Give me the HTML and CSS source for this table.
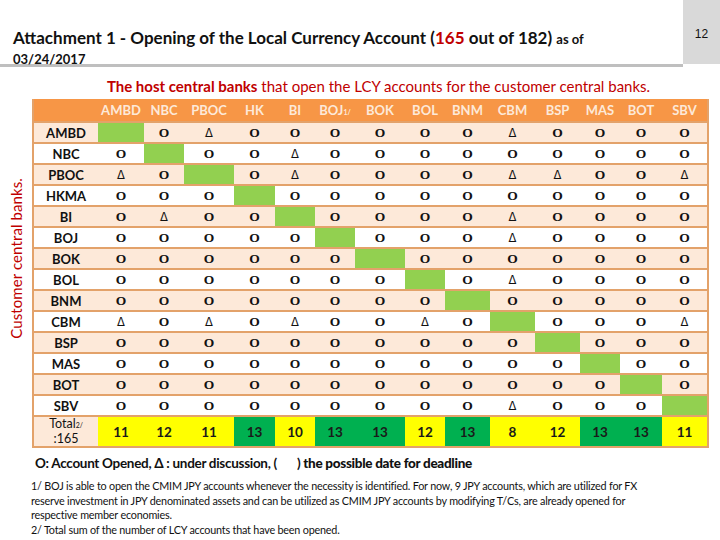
FILE: index.html
```html
<!DOCTYPE html>
<html>
<head>
<meta charset="utf-8">
<link rel="stylesheet" href="styles.css">
</head>
<body>
<div class="slide">
  <header class="top">
    <div class="title">
      <div class="title-line">Attachment 1 - Opening of the Local Currency Account (<span class="red">165</span> out of 182) <span class="small">as of</span></div>
      <div class="date">03/24/2017</div>
    </div>
    <div class="pagenum">12</div>
  </header>
  <div class="rule"></div>
  <p class="subtitle"><b>The host central banks</b> that open the LCY accounts for the customer central banks.</p>
  <div class="main">
    <div class="side"><span class="side-text">Customer central banks.</span></div>
    <table class="grid">
      <colgroup>
        <col class="w65"><col class="w46"><col class="w40"><col class="w50"><col class="w41"><col class="w40"><col class="w40"><col class="w50"><col class="w40"><col class="w45"><col class="w45"><col class="w45"><col class="w40"><col class="w42"><col class="w46">
      </colgroup>
      <thead>
        <tr><th></th><th>AMBD</th><th>NBC</th><th>PBOC</th><th>HK</th><th>BI</th><th>BOJ<sub>1/</sub></th><th>BOK</th><th>BOL</th><th>BNM</th><th>CBM</th><th>BSP</th><th>MAS</th><th>BOT</th><th>SBV</th></tr>
      </thead>
      <tbody id="body"></tbody>
      <tfoot>
        <tr class="total">
          <th class="lbl">Total<sub>2/</sub><br>:165</th>
          <td class="y">11</td><td class="y">12</td><td class="y">11</td><td class="g">13</td><td class="y">10</td><td class="g">13</td><td class="g">13</td><td class="y">12</td><td class="g">13</td><td class="y">8</td><td class="y">12</td><td class="g">13</td><td class="g">13</td><td class="y">11</td>
        </tr>
      </tfoot>
    </table>
  </div>
  <p class="legend">O: Account Opened, Δ : under discussion, (<span class="gap"></span>) <b>the possible date for deadline</b></p>
  <div class="notes">
    <p>1/ BOJ is able to open the CMIM JPY accounts whenever the necessity is identified. For now, 9 JPY accounts, which are utilized for FX reserve investment in JPY denominated assets and can be utilized as CMIM JPY accounts by modifying T/Cs, are already opened for respective member economies.</p>
    <p>2/ Total sum of the number of LCY accounts that have been opened.</p>
  </div>
</div>
<script src="app.js"></script>
</body>
</html>
```
FILE: app.js
```js
var rows = [
  ["AMBD","G","O","D","O","O","O","O","O","O","D","O","O","O","O"],
  ["NBC","O","G","O","O","D","O","O","O","O","O","O","O","O","O"],
  ["PBOC","D","O","G","O","D","O","O","O","O","D","D","O","O","D"],
  ["HKMA","O","O","O","G","O","O","O","O","O","O","O","O","O","O"],
  ["BI","O","D","O","O","G","O","O","O","O","D","O","O","O","O"],
  ["BOJ","O","O","O","O","O","G","O","O","O","D","O","O","O","O"],
  ["BOK","O","O","O","O","O","O","G","O","O","O","O","O","O","O"],
  ["BOL","O","O","O","O","O","O","O","G","O","D","O","O","O","O"],
  ["BNM","O","O","O","O","O","O","O","O","G","O","O","O","O","O"],
  ["CBM","D","O","D","O","D","O","O","D","O","G","O","O","O","D"],
  ["BSP","O","O","O","O","O","O","O","O","O","O","G","O","O","O"],
  ["MAS","O","O","O","O","O","O","O","O","O","O","O","G","O","O"],
  ["BOT","O","O","O","O","O","O","O","O","O","O","O","O","G","O"],
  ["SBV","O","O","O","O","O","O","O","O","O","D","O","O","O","G"]
];
var body = document.getElementById("body");
rows.forEach(function (r, i) {
  var tr = document.createElement("tr");
  tr.className = i % 2 === 0 ? "pink" : "white";
  var th = document.createElement("th");
  th.className = "lbl";
  th.textContent = r[0];
  tr.appendChild(th);
  for (var k = 1; k < r.length; k++) {
    var td = document.createElement("td");
    if (r[k] === "G") { td.className = "self"; }
    else if (r[k] === "D") { td.className = "tri"; td.textContent = "Δ"; }
    else { td.className = "o"; td.textContent = "O"; }
    tr.appendChild(td);
  }
  body.appendChild(tr);
});
```
FILE: styles.css
```css
html, body { margin: 0; padding: 0; background: #fff; }
.slide { width: 720px; height: 540px; overflow: hidden; position: relative; font-family: Lato, "Open Sans", sans-serif; color: #111; }
.top { display: flex; height: 64px; }
.title { flex: 1; padding: 28px 0 0 13px; font-weight: 700; font-size: 17px; line-height: 20px; letter-spacing: 0; }
.red { color: #c00000; }
.small { font-size: 13px; }
.date { font-size: 13px; }
.pagenum { width: 37px; background: #d9d9d9; font-family: "Liberation Sans", Arial, sans-serif; font-size: 12px; text-align: center; padding-top: 27px; box-sizing: border-box; }
.rule { height: 3px; background: #bfbfbf; margin-right: 37px; }
.subtitle { margin: 10px 0 0 0; padding-left: 37px; text-align: center; color: #c00000; font-size: 15px; line-height: 18px; letter-spacing: 0; }
.subtitle b { font-weight: 700; }
.main { display: flex; margin-top: 4px; }
.side { width: 32px; display: flex; align-items: center; justify-content: center; padding-bottom: 30px; box-sizing: border-box; }
.side-text { writing-mode: vertical-rl; transform: rotate(180deg); color: #c00000; font-size: 15px; white-space: nowrap; letter-spacing: 0.1px; }
.grid { border-collapse: collapse; table-layout: fixed; width: 675px; border-left: 2px solid #e3a26a; border-right: 2px solid #e3a26a; border-bottom: 2px solid #e3a26a; }
.w65 { width: 65px; } .w46 { width: 46px; } .w40 { width: 40px; } .w50 { width: 50px; } .w41 { width: 41px; } .w45 { width: 45px; } .w42 { width: 42px; }
.grid thead th { background: #f79646; color: #fde9d9; font-size: 13px; font-weight: 700; height: 22px; padding: 0; text-align: center; }
.grid sub { font-size: 7px; vertical-align: baseline; }
.grid tbody tr, .grid tfoot tr { border-top: 2px solid #e3a26a; }
.grid tbody th, .grid tbody td { height: 19px; padding: 0; text-align: center; }
.pink { background: #fde9d9; }
.white { background: #fff; }
.lbl { font-size: 13px; font-weight: 700; color: #111; }
.o { font-family: "Liberation Serif", serif; font-weight: 700; font-size: 13.5px; color: #111; }
.tri { font-family: "DejaVu Sans", sans-serif; font-size: 11.5px; color: #111; }
.self { background: #92d050; }
.total th, .total td { height: 29px; padding: 0; text-align: center; }
.total th { background: #fde9d9; font-size: 12.5px; line-height: 14px; font-weight: 400; }
.total td { font-size: 13.5px; font-weight: 700; color: #1a1a1a; }
.y { background: #ffff00; }
.g { background: #00b050; }
.legend { margin: 7px 0 0 35px; font-size: 13.5px; font-weight: 700; letter-spacing: -0.3px; }
.gap { display: inline-block; width: 20px; }
.notes { margin: 8px 0 0 31px; width: 618px; font-size: 10.8px; line-height: 14.7px; letter-spacing: -0.2px; }
.notes p { margin: 0; }
```
